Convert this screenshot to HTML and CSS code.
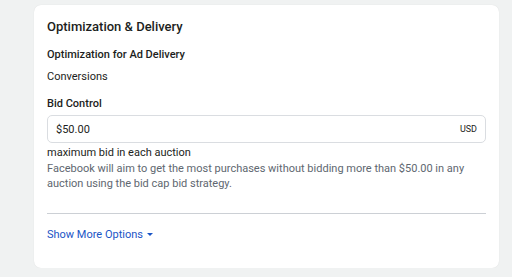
FILE: index.html
```html
<!DOCTYPE html>
<html lang="en">
<head>
  <meta charset="UTF-8">
  <title>Optimization &amp; Delivery</title>
  <link rel="stylesheet" href="styles.css">
</head>
<body>

  <div class="card">
    <h2 class="card-title">Optimization &amp; Delivery</h2>

    <div class="label">Optimization for Ad Delivery</div>
    <div class="value">Conversions</div>

    <div class="label">Bid Control</div>
    <div class="input-box">
      <span class="amount">$50.00</span>
      <span class="currency">USD</span>
    </div>
    <div class="hint">maximum bid in each auction</div>
    <p class="desc">Facebook will aim to get the most purchases without bidding more than $50.00 in any auction using the bid cap bid strategy.</p>

    <hr class="divider">

    <a class="more" href="#">Show More Options<span class="caret"></span></a>
  </div>

</body>
</html>
```

FILE: styles.css
```css
body {
  margin: 0;
  background-color: #f0f2f2;
  font-family: Roboto, "Liberation Sans", Arial, sans-serif;
  color: #1c1e21;
}
.card {
  box-sizing: border-box;
  width: 465px;
  height: 263px;
  margin: 5px 0 0 34px;
  padding: 14px 13px 0 13px;
  background-color: #fff;
  border-radius: 7px;
  box-shadow: 0 0 1px rgba(0, 0, 0, 0.12);
}
.card-title {
  margin: 0 0 12px 0;
  font-size: 13px;
  font-weight: 500;
  line-height: 16px;
}
.label {
  font-size: 11px;
  font-weight: 500;
  line-height: 15px;
}
.value {
  margin: 7px 0 12px 0;
  font-size: 11px;
  line-height: 15px;
}
.input-box {
  box-sizing: border-box;
  display: flex;
  align-items: center;
  justify-content: space-between;
  height: 28px;
  margin-top: 4px;
  padding: 0 8px;
  border: 1px solid #dadde1;
  border-radius: 5px;
}
.amount {
  font-size: 11px;
}
.currency {
  font-size: 9px;
}
.hint {
  margin-top: 2px;
  font-size: 11px;
  line-height: 15px;
}
.desc {
  margin: 1px 0 0 0;
  font-size: 11px;
  line-height: 15px;
  color: #606770;
}
.divider {
  margin: 22px 0 0 0;
  border: none;
  border-top: 1px solid #ccd0d5;
}
.more {
  display: inline-block;
  margin-top: 13px;
  font-size: 11px;
  line-height: 15px;
  color: #1a55c6;
  text-decoration: none;
}
.caret {
  display: inline-block;
  margin-left: 4px;
  vertical-align: 2px;
  border-left: 3px solid transparent;
  border-right: 3px solid transparent;
  border-top: 3px solid #1a55c6;
}
```
